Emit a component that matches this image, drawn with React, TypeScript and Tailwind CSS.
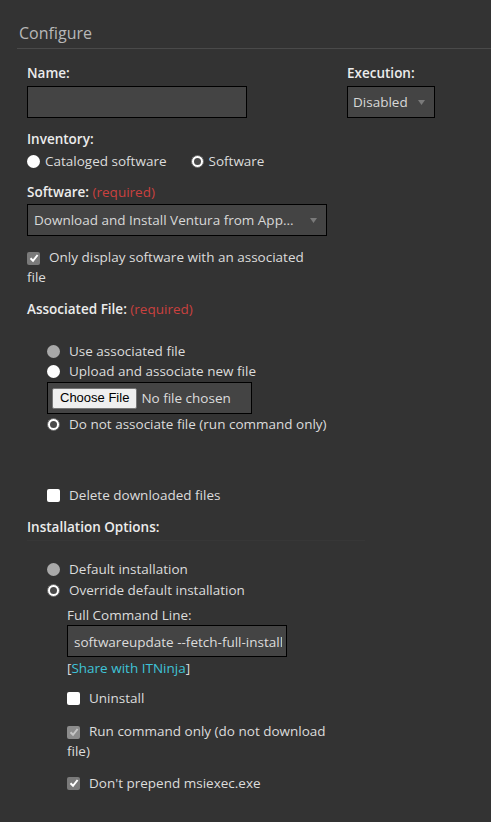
import React from 'react';

function Radio({ state }: { state: 'off' | 'on' | 'disabled' }) {
  if (state === 'disabled') {
    return <span className="inline-block h-[13px] w-[13px] shrink-0 rounded-full bg-[#a9a9a9]" />;
  }
  if (state === 'on') {
    return (
      <span className="flex h-[13px] w-[13px] shrink-0 items-center justify-center rounded-full border border-[#666] bg-white">
        <span className="h-[7px] w-[7px] rounded-full bg-[#4a4a4a]" />
      </span>
    );
  }
  return <span className="inline-block h-[13px] w-[13px] shrink-0 rounded-full bg-white" />;
}

function Check({ state }: { state: 'off' | 'on' | 'disabled' }) {
  if (state === 'off') {
    return <span className="inline-block h-[13px] w-[13px] shrink-0 rounded-[2px] bg-white" />;
  }
  const bg = state === 'on' ? 'bg-[#7a7a7a]' : 'bg-[#8c8c8c]';
  const stroke = state === 'on' ? '#ffffff' : '#c4c4c4';
  return (
    <span className={`flex h-[13px] w-[13px] shrink-0 items-center justify-center rounded-[2px] ${bg}`}>
      <svg width="10" height="10" viewBox="0 0 10 10">
        <path d="M1.5 5.3 L4 7.8 L8.6 2" fill="none" stroke={stroke} strokeWidth="2" />
      </svg>
    </span>
  );
}

function Caret() {
  return (
    <svg width="7" height="5" viewBox="0 0 7 5" className="shrink-0">
      <path d="M0 0 H7 L3.5 5 Z" fill="#7a7a7a" />
    </svg>
  );
}

function Label({ children }: { children: React.ReactNode }) {
  return <div className="h-5 text-[13.5px] font-semibold leading-5 text-[#ececec]">{children}</div>;
}

function Required() {
  return <span className="font-normal text-[#c9413f]"> (required)</span>;
}

export default function App() {
  return (
    <div className="min-h-[822px] w-[491px] bg-[#333333] pt-[22px] text-[13.5px] text-[#dcdcdc]" style={{ fontFamily: '"Open Sans", sans-serif' }}>
      <div className="ml-[17px] border-b border-[#4a4a4a] pb-[4px] pl-[2px] text-[16px] leading-[22px] text-[#b8b8b8]">
        Configure
      </div>

      <div className="pl-[27px]">
        <div className="mt-[14px] flex">
          <div className="w-[320px]">
            <Label>Name:</Label>
            <input
              readOnly
              value=""
              className="mt-[3px] block h-8 w-[220px] border border-black bg-[#444444] outline-none"
            />
          </div>
          <div>
            <Label>Execution:</Label>
            <div className="mt-[3px] flex h-8 w-[88px] items-center justify-between border border-black bg-[#444444] pl-[5px] pr-[9px] pt-[1px] text-[#d8d8d8]">
              <span>Disabled</span>
              <Caret />
            </div>
          </div>
        </div>

        <div className="mt-[11px]">
          <Label>Inventory:</Label>
          <div className="mt-[2px] flex h-5 items-center leading-5">
            <Radio state="off" />
            <span className="ml-[5px]">Cataloged software</span>
            <span className="ml-[24px] flex items-center">
              <Radio state="on" />
              <span className="ml-[5px]">Software</span>
            </span>
          </div>
        </div>

        <div className="mt-[11px]">
          <Label>
            Software:<Required />
          </Label>
          <div className="mt-[2px] flex h-8 w-[300px] items-center justify-between border border-black bg-[#444444] pl-[6px] pr-[9px] pt-[1px] text-[#d8d8d8]">
            <span>Download and Install Ventura from App...</span>
            <Caret />
          </div>
        </div>

        <div className="mt-[11px] w-[290px] leading-5">
          <span className="mr-[9px] inline-block align-[-1px]">
            <Check state="on" />
          </span>
          Only display software with an associated file
        </div>

        <div className="mt-[12px]">
          <Label>
            Associated File:<Required />
          </Label>
        </div>

        <div className="mt-[22px] pl-[20px] leading-5">
          <div className="flex h-5 items-center">
            <Radio state="disabled" />
            <span className="ml-[9px]">Use associated file</span>
          </div>
          <div className="flex h-5 items-center">
            <Radio state="off" />
            <span className="ml-[9px]">Upload and associate new file</span>
          </div>
          <div className="mt-[1px] flex h-8 w-[205px] items-center border border-black bg-[#444444] pl-[4px]">
            <span
              className="flex h-[21px] items-center rounded-[2px] border border-[#767676] bg-[#efefef] px-[7px] text-[13px] text-black"
              style={{ fontFamily: '"Liberation Sans", Arial, sans-serif' }}
            >
              Choose File
            </span>
            <span className="ml-[4px]">No file chosen</span>
          </div>
          <div className="flex h-5 items-center">
            <Radio state="on" />
            <span className="ml-[9px]">Do not associate file (run command only)</span>
          </div>

          <div className="mt-[51px] flex h-5 items-center">
            <Check state="off" />
            <span className="ml-[9px]">Delete downloaded files</span>
          </div>
        </div>

        <div className="mt-[12px]">
          <Label>Installation Options:</Label>
          <div className="mt-[3px] w-[338px] border-b border-[#373737]" />
        </div>

        <div className="mt-[18px] pl-[20px] leading-5">
          <div className="flex h-5 items-center">
            <Radio state="disabled" />
            <span className="ml-[9px]">Default installation</span>
          </div>
          <div className="mt-[1px] flex h-5 items-center">
            <Radio state="on" />
            <span className="ml-[9px]">Override default installation</span>
          </div>

          <div className="mt-[5px] pl-[20px]">
            <div className="h-5">Full Command Line:</div>
            <input
              readOnly
              value="softwareupdate --fetch-full-installer"
              className="block h-8 w-[220px] border border-black bg-[#444444] pl-[6px] pr-[4px] pt-[1px] text-[13.5px] text-[#dcdcdc] outline-none"
              style={{ fontFamily: '"Open Sans", sans-serif' }}
            />
            <div className="mt-[1px] h-5">
              [<span className="text-[#3fc3d8]">Share with ITNinja</span>]
            </div>

            <div className="mt-[10px] flex h-5 items-center">
              <Check state="off" />
              <span className="ml-[9px]">Uninstall</span>
            </div>

            <div className="mt-[13px] w-[275px]">
              <span className="mr-[9px] inline-block align-[-1px]">
                <Check state="disabled" />
              </span>
              Run command only (do not download file)
            </div>

            <div className="mt-[12px] flex h-5 items-center">
              <Check state="on" />
              <span className="ml-[9px]">Don't prepend msiexec.exe</span>
            </div>
          </div>
        </div>
      </div>
    </div>
  );
}
